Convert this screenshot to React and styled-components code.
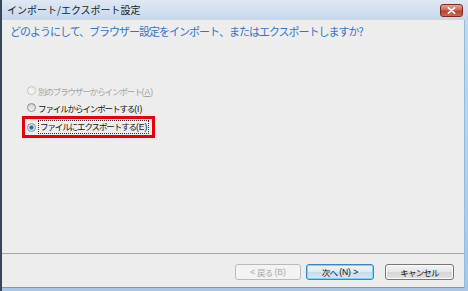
import React from 'react'
import styled, { createGlobalStyle } from 'styled-components'

const Global = createGlobalStyle`
  html, body { margin: 0; padding: 0; background: #ffffff; }
  body { font-family: "Noto Sans CJK JP", "Liberation Sans", sans-serif; }
`

const Window = styled.div`
  width: 468px;
  height: 291px;
  box-sizing: border-box;
  display: flex;
  flex-direction: column;
  border-left: 2px solid #34475c;
  background: linear-gradient(to bottom, #dfe8f3 0px, #c7d8ec 20px, #a9c6e4 100%);
  padding: 0 3px 3px 0;
  overflow: hidden;
`

const TitleBar = styled.div`
  height: 20px;
  flex: none;
  display: flex;
  align-items: center;
  justify-content: space-between;
  padding: 0 2px 0 5px;
`

const TitleText = styled.span`
  font-size: 10px;
  color: #1b1b1b;
  line-height: 12px;
`

const CloseButton = styled.div`
  width: 23px;
  height: 13px;
  box-sizing: border-box;
  margin-top: 1px;
  border: 1px solid #7b2c22;
  border-radius: 3px;
  background: linear-gradient(to bottom, #e4a297 0%, #d06a58 45%, #b9402d 55%, #cf6a4d 100%);
  display: flex;
  align-items: center;
  justify-content: center;
`

const Panel = styled.div`
  flex: 1;
  display: flex;
  flex-direction: column;
  background: #ededed;
  border-right: 1px solid #8fbde0;
  border-bottom: 1px solid #5aa3d4;
`

const Body = styled.div`
  flex: 1;
  padding: 4px 8px 0 8px;
`

const Heading = styled.div`
  font-size: 11px;
  line-height: 14px;
  letter-spacing: -1px;
  color: #3474c6;
`

const OptionList = styled.div`
  margin-top: 44px;
  display: flex;
  flex-direction: column;
  align-items: flex-start;
  padding-left: 17px;
`

const Option = styled.div`
  height: 17px;
  display: flex;
  align-items: center;
  gap: 2px;
  font-size: 8.5px;
  letter-spacing: -1.1px;
  color: ${p => (p.$disabled ? '#a3a3a3' : '#111111')};
`

const Key = styled.span`
  letter-spacing: 0;
  font-family: "Liberation Sans", sans-serif;
  font-size: 8.5px;
`

const Highlight = styled.div`
  margin-left: -5px;
  border: 3px solid #e8000e;
  padding: 0 3px 0 2px;
  height: 16px;
  display: flex;
  align-items: center;
`

const Radio = styled.span`
  width: 9px;
  height: 9px;
  box-sizing: border-box;
  border-radius: 50%;
  flex: none;
  border: 1px solid ${p => (p.$disabled ? '#c4c4c4' : '#8c8c8c')};
  background: ${p =>
    p.$checked
      ? 'radial-gradient(circle, #1f4f86 0, #3f86c6 1.8px, #dde8f2 2.6px, #e8e8e8 100%)'
      : p.$disabled
      ? 'linear-gradient(#ececec, #f7f7f7)'
      : 'linear-gradient(#d2d2d2, #f4f4f4)'};
`

const FocusLabel = styled.span`
  border: 1px dotted #333;
  padding: 0 1px;
  line-height: 11px;
`

const Footer = styled.div`
  flex: none;
  height: 34px;
  box-sizing: border-box;
  border-top: 1px solid #a5a5a5;
  display: flex;
  justify-content: flex-end;
  padding: 10px 10px 0 0;
`

const Button = styled.div`
  width: ${p => p.$w}px;
  height: 16px;
  margin-left: ${p => p.$gap}px;
  box-sizing: border-box;
  border-radius: 3px;
  display: flex;
  align-items: center;
  justify-content: center;
  gap: 2px;
  font-size: 8.5px;
  letter-spacing: -0.8px;
  color: ${p => (p.$disabled ? '#a6a6a6' : '#111111')};
  border: 1px solid ${p => (p.$disabled ? '#b7bbbe' : p.$default ? '#3d86bd' : '#767676')};
  background: ${p =>
    p.$disabled
      ? '#f3f3f3'
      : p.$default
      ? 'linear-gradient(to bottom, #eef6fb 0%, #dde9f2 50%, #c7dbea 51%, #d9e8f3 100%)'
      : 'linear-gradient(to bottom, #f3f3f3 0%, #e6e6e6 50%, #d6d6d6 51%, #e2e2e2 100%)'};
  box-shadow: ${p => (p.$default ? 'inset 0 0 0 1px #7ed2f6' : p.$disabled ? 'none' : 'inset 0 0 0 1px #fafafa')};
`

function App() {
  return (
    <>
      <Global />
      <Window>
        <TitleBar>
          <TitleText>インポート/エクスポート設定</TitleText>
          <CloseButton>
            <svg width="9" height="7" viewBox="0 0 9 7">
              <path d="M1.5 0.8 L7.5 6.2 M7.5 0.8 L1.5 6.2" stroke="#ffffff" strokeWidth="1.8" strokeLinecap="round" />
            </svg>
          </CloseButton>
        </TitleBar>
        <Panel>
          <Body>
            <Heading>どのようにして、ブラウザー設定をインポート、またはエクスポートしますか?</Heading>
            <OptionList>
              <Option $disabled>
                <Radio $disabled />
                <span>別のブラウザーからインポート<Key>(<u>A</u>)</Key></span>
              </Option>
              <Option>
                <Radio />
                <span>ファイルからインポートする<Key>(I)</Key></span>
              </Option>
              <Highlight>
                <Option>
                  <Radio $checked />
                  <FocusLabel>ファイルにエクスポートする<Key>(E)</Key></FocusLabel>
                </Option>
              </Highlight>
            </OptionList>
          </Body>
          <Footer>
            <Button $w={66} $gap={0} $disabled><Key>&lt;</Key> 戻る<Key>(B)</Key></Button>
            <Button $w={68} $gap={5} $default>次へ<Key>(N) &gt;</Key></Button>
            <Button $w={69} $gap={11}>キャンセル</Button>
          </Footer>
        </Panel>
      </Window>
    </>
  )
}

export default App
